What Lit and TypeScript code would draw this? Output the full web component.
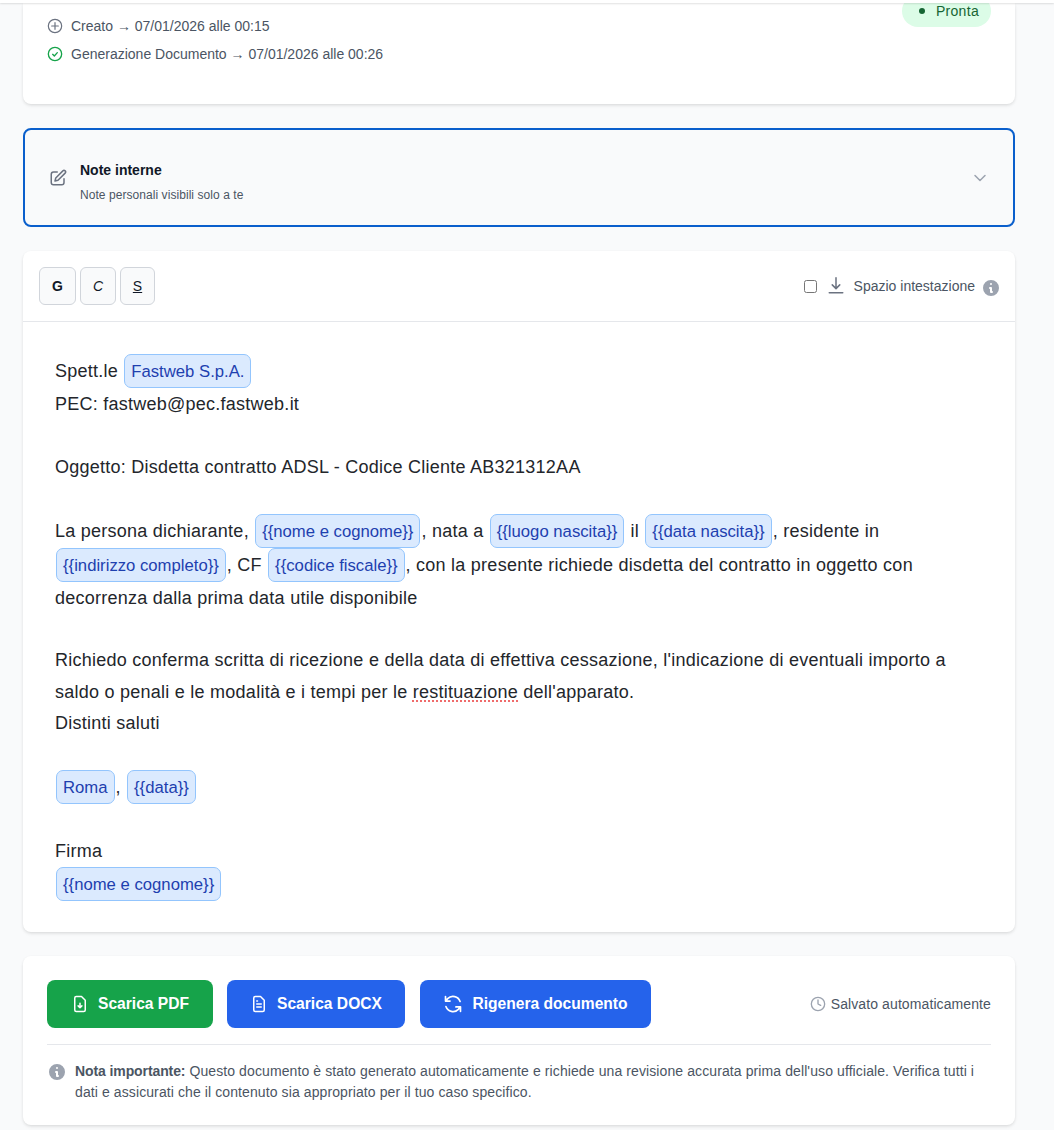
import { LitElement, html, css, svg } from 'lit';
import { customElement } from 'lit/decorators.js';

const icon = (size: number, body: unknown, width = 2) => html`
  <svg
    width=${size}
    height=${size}
    viewBox="0 0 24 24"
    fill="none"
    stroke="currentColor"
    stroke-width=${width}
    stroke-linecap="round"
    stroke-linejoin="round"
  >
    ${body}
  </svg>
`;

const infoIcon = (size: number) => html`
  <svg width=${size} height=${size} viewBox="0 0 20 20" fill="currentColor">
    <path
      fill-rule="evenodd"
      d="M18 10a8 8 0 1 1-16 0 8 8 0 0 1 16 0Zm-7-4a1 1 0 1 1-2 0 1 1 0 0 1 2 0ZM9 9a1 1 0 0 0 0 2v3a1 1 0 0 0 1 1h1a1 1 0 1 0 0-2v-3a1 1 0 0 0-1-1H9Z"
      clip-rule="evenodd"
    />
  </svg>
`;

const plusCircle = svg`<circle cx="12" cy="12" r="10"/><path d="M12 7v10M7 12h10"/>`;
const checkCircle = svg`<circle cx="12" cy="12" r="10"/><path d="m8.5 12.5 2.5 2.5 4.5-5"/>`;
const pencilSquare = svg`<path d="M11 4H6a3 3 0 0 0-3 3v11a3 3 0 0 0 3 3h11a3 3 0 0 0 3-3v-5"/><path d="M18.5 2.5a2.1 2.1 0 0 1 3 3L12 15l-4 1 1-4 9.5-9.5Z"/>`;
const chevron = svg`<path d="m6 9 6 6 6-6"/>`;
const trayDown = svg`<path d="M12 1v14M7 10.5l5 5 5-5M3 21h18"/>`;
const filePdf = svg`<path d="M14 2H7a2 2 0 0 0-2 2v16a2 2 0 0 0 2 2h10a2 2 0 0 0 2-2V7l-5-5Z"/><path d="M12 11v6M9.5 14.5 12 17l2.5-2.5"/>`;
const fileDoc = svg`<path d="M14 2H7a2 2 0 0 0-2 2v16a2 2 0 0 0 2 2h10a2 2 0 0 0 2-2V7l-5-5Z"/><path d="M9 12h6M9 16h6M9 8h1"/>`;
const refresh = svg`<path d="M20.5 9A9 9 0 0 0 5.6 5.6L3 8.5M3 3v5.5h5.5"/><path d="M3.5 15a9 9 0 0 0 14.9 3.4l2.6-2.9M21 21v-5.5h-5.5"/>`;
const clock = svg`<circle cx="12" cy="12" r="10"/><path d="M12 6v6l4 2"/>`;

@customElement('app-root')
export class AppRoot extends LitElement {
  static styles = css`
    :host {
      display: block;
      height: 1130px;
      overflow: hidden;
      background: #f9fafb;
      font-family: 'Liberation Sans', Arial, sans-serif;
      color: #111827;
    }

    .topbar {
      position: relative;
      z-index: 2;
      height: 3px;
      background: #fff;
      box-shadow: 0 1px 2px rgba(0, 0, 0, 0.12);
    }

    .page {
      display: flex;
      flex-direction: column;
      gap: 24px;
      padding: 0 39px 0 23px;
    }

    .card {
      background: #fff;
      border-radius: 8px;
      box-shadow: 0 2px 4px -1px rgba(0, 0, 0, 0.1), 0 1px 3px rgba(0, 0, 0, 0.06);
    }

    /* History */
    .history {
      display: flex;
      justify-content: space-between;
      align-items: flex-start;
      height: 101px;
      padding: 0 24px;
      border-radius: 0 0 8px 8px;
      box-sizing: border-box;
    }

    .events {
      display: flex;
      flex-direction: column;
      gap: 8px;
      padding-top: 13px;
    }

    .event {
      display: flex;
      align-items: center;
      gap: 8px;
      height: 20px;
      font-size: 14px;
      color: #4b5563;
    }

    .event span {
      display: flex;
    }

    .event .plus {
      color: #6b7280;
    }

    .event .done {
      color: #16a34a;
    }

    .pill {
      display: flex;
      align-items: center;
      gap: 11px;
      height: 32px;
      margin-top: -8px;
      padding: 0 12px 0 17px;
      border-radius: 16px;
      background: #dcfce7;
      color: #166534;
      font-size: 14px;
      letter-spacing: 0.3px;
    }

    .pill i {
      width: 6px;
      height: 6px;
      border-radius: 50%;
      background: #166534;
    }

    /* Notes */
    .notes {
      display: flex;
      align-items: center;
      height: 99px;
      box-sizing: border-box;
      padding: 0 23px 0 24px;
      border: 2px solid #0a5fcc;
      border-radius: 8px;
      background: #f9fafb;
    }

    .notes .edit {
      display: flex;
      color: #6b7280;
      margin-right: 13px;
    }

    .notes .text {
      flex: 1;
      padding-top: 8px;
    }

    .notes h3 {
      margin: 0 0 7px;
      font-size: 14px;
      line-height: 20px;
      font-weight: 700;
      color: #111827;
    }

    .notes p {
      margin: 0;
      font-size: 12px;
      line-height: 16px;
      letter-spacing: 0.06px;
      color: #4b5563;
    }

    .notes .chevron {
      display: flex;
      color: #9ca3af;
    }

    /* Editor */
    .toolbar {
      display: flex;
      align-items: center;
      justify-content: space-between;
      height: 71px;
      box-sizing: border-box;
      padding: 0 16px;
      border-bottom: 1px solid #e5e7eb;
    }

    .format {
      display: flex;
      gap: 4px;
    }

    .format button {
      width: 36px;
      height: 38px;
      padding: 0;
      border: 1px solid #d1d5db;
      border-radius: 6px;
      background: #f9fafb;
      color: #111827;
      font: 14px 'Liberation Sans', Arial, sans-serif;
    }

    .format .bold {
      width: 37px;
      font-weight: 700;
    }

    .format .italic {
      font-style: italic;
    }

    .format .under {
      width: 35px;
      text-decoration: underline;
    }

    .header-space {
      display: flex;
      align-items: center;
      font-size: 14px;
      color: #4b5563;
    }

    .header-space input {
      width: 13px;
      height: 13px;
      margin: 0 10px 0 0;
    }

    .header-space .down {
      display: flex;
      color: #6b7280;
      margin-right: 9px;
    }

    .header-space .info {
      display: flex;
      color: #9ca3af;
      margin: 4px -2px 0 6px;
    }

    .body {
      padding: 33px 32px 30px;
      font-size: 18px;
      line-height: 31.4px;
      letter-spacing: 0.25px;
      color: #23262b;
    }

    .chip {
      display: inline-block;
      height: 34px;
      box-sizing: border-box;
      padding: 0 6px;
      margin: -1px 1px 1px;
      border: 1px solid #93c5fd;
      border-radius: 7px;
      background: #dbeafe;
      color: #1e40af;
      font-size: 16.7px;
      line-height: 34px;
      letter-spacing: 0;
      vertical-align: middle;
    }

    .typo {
      text-decoration: underline dotted #ef6b6b 2px;
      text-underline-offset: 3px;
    }

    /* Actions */
    .actions {
      padding: 24px 24px 22px;
    }

    .action-row {
      display: flex;
      align-items: center;
      padding-bottom: 16px;
      border-bottom: 1px solid #e5e7eb;
    }

    .btn {
      display: flex;
      align-items: center;
      justify-content: center;
      gap: 9px;
      height: 48px;
      margin-right: 14px;
      border-radius: 8px;
      background: #2563eb;
      color: #fff;
      font-size: 15.6px;
      font-weight: 700;
    }

    .btn.pdf {
      width: 166px;
      background: #16a34a;
    }

    .btn.docx {
      width: 178px;
      margin-right: 15px;
    }

    .btn.regen {
      width: 231px;
    }

    .saved {
      display: flex;
      align-items: center;
      gap: 5px;
      margin-left: auto;
      font-size: 14px;
      letter-spacing: 0.1px;
      color: #4b5563;
    }

    .saved svg {
      color: #9ca3af;
    }

    .disclaimer {
      display: flex;
      gap: 8px;
      padding-top: 16px;
      font-size: 14px;
      line-height: 21px;
      letter-spacing: 0.1px;
      color: #4b5563;
    }

    .disclaimer .info {
      display: flex;
      flex: none;
      color: #9ca3af;
      margin-top: 1px;
    }

    .disclaimer p {
      margin: 0;
    }

    .disclaimer b {
      letter-spacing: -0.1px;
    }
  `;

  private chip(text: string) {
    return html`<span class="chip">${text}</span>`;
  }

  render() {
    return html`
      <div class="topbar"></div>
      <div class="page">
        <section class="card history">
          <div class="events">
            <div class="event">
              <span class="plus">${icon(16, plusCircle, 1.8)}</span>
              Creato → 07/01/2026 alle 00:15
            </div>
            <div class="event">
              <span class="done">${icon(16, checkCircle, 2)}</span>
              Generazione Documento → 07/01/2026 alle 00:26
            </div>
          </div>
          <div class="pill"><i></i>Pronta</div>
        </section>

        <section class="notes">
          <span class="edit">${icon(18, pencilSquare)}</span>
          <div class="text">
            <h3>Note interne</h3>
            <p>Note personali visibili solo a te</p>
          </div>
          <span class="chevron">${icon(20, chevron, 1.8)}</span>
        </section>

        <section class="card">
          <div class="toolbar">
            <div class="format">
              <button class="bold">G</button>
              <button class="italic">C</button>
              <button class="under">S</button>
            </div>
            <label class="header-space">
              <input type="checkbox" />
              <span class="down">${icon(18, trayDown, 2)}</span>
              Spazio intestazione
              <span class="info">${infoIcon(20)}</span>
            </label>
          </div>
          <div class="body">
            <div>Spett.le ${this.chip('Fastweb S.p.A.')}</div>
            <div>PEC: fastweb@pec.fastweb.it</div>
            <div><br /></div>
            <div>Oggetto: Disdetta contratto ADSL - Codice Cliente AB321312AA</div>
            <div><br /></div>
            <div>
              La persona dichiarante, ${this.chip('{{nome e cognome}}')}, nata a
              ${this.chip('{{luogo nascita}}')} il ${this.chip('{{data nascita}}')}, residente in
              ${this.chip('{{indirizzo completo}}')}, CF ${this.chip('{{codice fiscale}}')}, con la
              presente richiede disdetta del contratto in oggetto con decorrenza dalla prima data
              utile disponibile
            </div>
            <div><br /></div>
            <div>
              Richiedo conferma scritta di ricezione e della data di effettiva cessazione,
              l'indicazione di eventuali importo a saldo o penali e le modalità e i tempi per le
              <span class="typo">restituazione</span> dell'apparato.
            </div>
            <div>Distinti saluti</div>
            <div><br /></div>
            <div>${this.chip('Roma')}, ${this.chip('{{data}}')}</div>
            <div><br /></div>
            <div>Firma</div>
            <div>${this.chip('{{nome e cognome}}')}</div>
          </div>
        </section>

        <section class="card actions">
          <div class="action-row">
            <div class="btn pdf">${icon(18, filePdf)}Scarica PDF</div>
            <div class="btn docx">${icon(18, fileDoc)}Scarica DOCX</div>
            <div class="btn regen">${icon(20, refresh)}Rigenera documento</div>
            <div class="saved">${icon(16, clock)}Salvato automaticamente</div>
          </div>
          <div class="disclaimer">
            <span class="info">${infoIcon(20)}</span>
            <p>
              <b>Nota importante:</b> Questo documento è stato generato automaticamente e richiede
              una revisione accurata prima dell'uso ufficiale. Verifica tutti i dati e assicurati
              che il contenuto sia appropriato per il tuo caso specifico.
            </p>
          </div>
        </section>
      </div>
    `;
  }
}

declare global {
  interface HTMLElementTagNameMap {
    'app-root': AppRoot;
  }
}
